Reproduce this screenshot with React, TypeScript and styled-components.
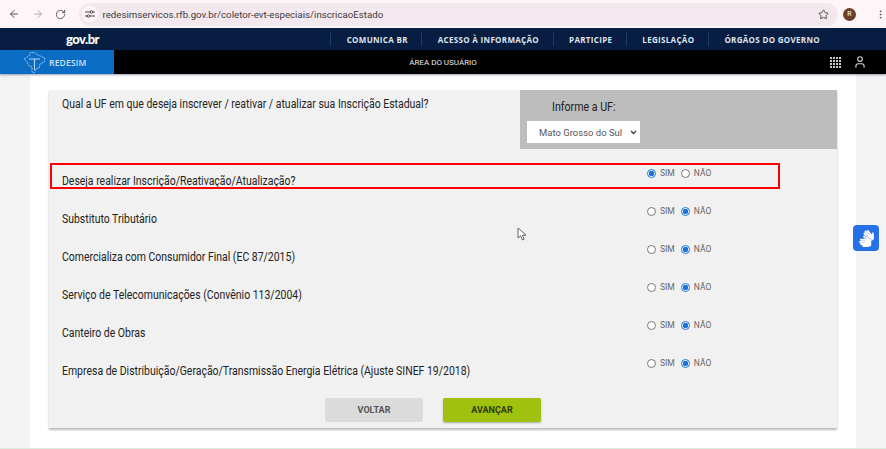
import { ArrowLeft, ArrowRight, EllipsisVertical, RotateCw, Star, User } from 'lucide-react';
import { FaSignLanguage } from 'react-icons/fa';
import styled, { createGlobalStyle } from 'styled-components';

const NAV_ITEMS = ['COMUNICA BR', 'ACESSO À INFORMAÇÃO', 'PARTICIPE', 'LEGISLAÇÃO', 'ÓRGÃOS DO GOVERNO'];

const QUESTIONS = [
  { label: 'Deseja realizar Inscrição/Reativação/Atualização?', yes: true, marked: true },
  { label: 'Substituto Tributário', yes: false },
  { label: 'Comercializa com Consumidor Final (EC 87/2015)', yes: false },
  { label: 'Serviço de Telecomunicações (Convênio 113/2004)', yes: false },
  { label: 'Canteiro de Obras', yes: false },
  { label: 'Empresa de Distribuição/Geração/Transmissão Energia Elétrica (Ajuste SINEF 19/2018)', yes: false },
];

const CHEVRON =
  "url(\"data:image/svg+xml,%3Csvg xmlns='http://www.w3.org/2000/svg' width='7' height='5'%3E%3Cpath d='M1 1l2.5 2.5L6 1' fill='none' stroke='%23444' stroke-width='1.4'/%3E%3C/svg%3E\")";

const App = () => {
  return (
    <>
      <GlobalStyle />
      <BrowserBar>
        <ToolIcon><ArrowLeft size={12} /></ToolIcon>
        <ToolIcon $faded><ArrowRight size={12} /></ToolIcon>
        <ToolIcon><RotateCw size={11} /></ToolIcon>
        <UrlPill>
          <TuneBadge>
            <svg width="10" height="8" viewBox="0 0 10 8" fill="none" stroke="#444" strokeWidth="1">
              <path d="M0 2h5M8 2h2M0 6h2M5 6h5" />
              <circle cx="6.5" cy="2" r="1.3" />
              <circle cx="3.5" cy="6" r="1.3" />
            </svg>
          </TuneBadge>
          <UrlText>redesimservicos.rfb.gov.br/coletor-evt-especiais/inscricaoEstado</UrlText>
          <Star size={11} color="#444" />
        </UrlPill>
        <Avatar>R</Avatar>
        <EllipsisVertical size={11} color="#555" />
      </BrowserBar>

      <GovBar>
        <GovLogo>gov.br</GovLogo>
        <GovNav>
          {NAV_ITEMS.map((item) => (
            <GovNavItem key={item}>{item}</GovNavItem>
          ))}
        </GovNav>
      </GovBar>

      <UserBar>
        <LogoBox>
          <svg width="24" height="24" viewBox="0 0 24 24" fill="none" stroke="#b9d6f2" strokeWidth="0.8">
            <path d="M1 9l5-3 2-4 4 1 3 2 7 3-1 4-4 2-1 4-3 1-2 4-2-1 0-5-3-1-2-4z" strokeDasharray="2 0.8" />
            <path d="M6 9h11M11.5 9v11" strokeWidth="1.1" />
          </svg>
          <LogoText>REDESIM</LogoText>
        </LogoBox>
        <UserBarTitle>ÁREA DO USUÁRIO</UserBarTitle>
        <UserBarIcons>
          <svg width="11" height="11" viewBox="0 0 11 11" fill="#c8c8c8">
            {[0, 3, 6, 9].flatMap((y) =>
              [0, 3, 6, 9].map((x) => <rect key={`${x}-${y}`} x={x} y={y} width="2" height="2" />),
            )}
          </svg>
          <User size={14} />
        </UserBarIcons>
      </UserBar>

      <Page>
        <Sheet>
          <Card>
            <TopRow>
              <TopQuestion>Qual a UF em que deseja inscrever / reativar / atualizar sua Inscrição Estadual?</TopQuestion>
              <UfBox>
                <UfTitle>Informe a UF:</UfTitle>
                <UfSelect defaultValue="MS">
                  <option value="MS">Mato Grosso do Sul</option>
                </UfSelect>
              </UfBox>
            </TopRow>

            <Questions>
              {QUESTIONS.map(({ label, yes, marked }) => (
                <QuestionRow key={label} $marked={marked}>
                  <QuestionLabel>{label}</QuestionLabel>
                  <RadioGroup>
                    <RadioLabel>
                      <Radio type="radio" name={label} defaultChecked={yes} />
                      SIM
                    </RadioLabel>
                    <RadioLabel>
                      <Radio type="radio" name={label} defaultChecked={!yes} />
                      NÃO
                    </RadioLabel>
                  </RadioGroup>
                </QuestionRow>
              ))}
            </Questions>

            <Actions>
              <ActionButton>VOLTAR</ActionButton>
              <ActionButton $primary>AVANÇAR</ActionButton>
            </Actions>
          </Card>
        </Sheet>
      </Page>
      <BottomStrip />

      <Pointer width="10" height="14" viewBox="0 0 10 14">
        <path d="M1 1v10l2.6-2.2L5.4 13l1.8-.8-1.8-4H9z" fill="#fff" stroke="#555" strokeWidth="0.9" />
      </Pointer>
      <SignButton aria-label="Libras">
        <FaSignLanguage size={17} color="#fff" />
      </SignButton>
    </>
  );
};

const GlobalStyle = createGlobalStyle`
  html, body {
    margin: 0;
    height: 449px;
    overflow: hidden;
    background: #fff;
    font-family: Roboto, "Liberation Sans", sans-serif;
  }
  *, *::after {
    box-sizing: border-box;
  }
`;

const BrowserBar = styled.div`
  display: flex;
  align-items: center;
  height: 28px;
  padding: 0 0 0 8px;
  background: #fdf5f7;
  color: #555;
`;

const ToolIcon = styled.span<{ $faded?: boolean }>`
  display: flex;
  justify-content: center;
  width: 12px;
  margin-right: 11.5px;
  color: ${({ $faded }) => ($faded ? '#aaa' : '#555')};
`;

const UrlPill = styled.div`
  display: flex;
  align-items: center;
  width: 760px;
  height: 23px;
  margin-left: 1px;
  padding: 0 9px 0 3px;
  border-radius: 12px;
  background: #f3e8ee;
`;

const TuneBadge = styled.span`
  display: flex;
  align-items: center;
  justify-content: center;
  width: 16px;
  height: 16px;
  border-radius: 50%;
  background: #fdf5f7;
`;

const UrlText = styled.span`
  flex: 1;
  margin-left: 4px;
  font-size: 9.7px;
  color: #3c3c40;
  white-space: nowrap;
`;

const Avatar = styled.span`
  display: flex;
  align-items: center;
  justify-content: center;
  width: 13px;
  height: 13px;
  margin: 0 19px 0 5px;
  border-radius: 50%;
  background: #6d3f2b;
  color: #fff;
  font-size: 7px;
`;

const GovBar = styled.div`
  display: flex;
  align-items: center;
  justify-content: space-between;
  height: 22px;
  padding: 0 66px;
  background: #071d41;
`;

const GovLogo = styled.span`
  color: #fff;
  font-family: Lato, sans-serif;
  font-size: 13px;
  font-weight: 900;
  letter-spacing: -0.5px;
`;

const GovNav = styled.nav`
  display: flex;
  height: 14px;
`;

const GovNavItem = styled.span`
  display: flex;
  align-items: center;
  padding: 0 13.5px 0 15.5px;
  border-left: 1px solid #21385e;
  color: #dfe4ec;
  font-family: "Open Sans", sans-serif;
  font-size: 8px;
  font-weight: 700;
  letter-spacing: 0.32px;
  white-space: nowrap;

  &:last-child {
    padding-right: 0;
  }
`;

const UserBar = styled.div`
  display: grid;
  grid-template-columns: 114px 1fr 114px;
  align-items: center;
  height: 24px;
  background: #000;
  box-shadow: 0 1px 2px rgba(60, 70, 110, 0.5);
  position: relative;
`;

const LogoBox = styled.div`
  display: flex;
  align-items: center;
  gap: 2px;
  height: 24px;
  padding-left: 23px;
  background: #0b6cc4;
`;

const LogoText = styled.span`
  color: #cfe3f6;
  font-family: "Open Sans", sans-serif;
  font-size: 8.5px;
  font-weight: 600;
  letter-spacing: 0.2px;
`;

const UserBarTitle = styled.span`
  color: #e8e8e8;
  font-size: 8px;
  text-align: center;
`;

const UserBarIcons = styled.div`
  display: flex;
  align-items: center;
  justify-content: flex-end;
  gap: 12px;
  padding-right: 19px;
  color: #ccc;
`;

const Page = styled.main`
  height: 374px;
  padding: 0 30px;
  background: #f3f3f3;
`;

const Sheet = styled.div`
  height: 100%;
  padding: 16px 19px 0;
  background: #fff;
`;

const Card = styled.section`
  height: 338px;
  background: #f1f1f1;
  box-shadow: 0 2px 2px #bbb;
`;

const TopRow = styled.div`
  display: grid;
  grid-template-columns: 471px 1fr;
  height: 59px;
`;

// the reference is squeezed sideways, so the text is narrowed rather than made smaller
const TopQuestion = styled.p`
  margin: 7px 0 0 13px;
  color: #222;
  font-size: 12px;
  line-height: 15px;
  white-space: nowrap;
  transform: scaleX(0.872);
  transform-origin: left;
`;

const UfBox = styled.div`
  display: flex;
  flex-direction: column;
  padding: 10px 0 0 7px;
  background: #bdbdbd;
`;

const UfTitle = styled.span`
  margin-left: 25px;
  color: #222;
  font-size: 12px;
  line-height: 15px;
  transform: scaleX(0.887);
  transform-origin: left;
`;

const UfSelect = styled.select`
  appearance: none;
  width: 113px;
  height: 22px;
  margin-top: 6px;
  padding: 0 0 0 12px;
  border: none;
  border-radius: 0;
  background: #fff ${CHEVRON} no-repeat right 3px center;
  color: #555;
  font-family: Roboto, sans-serif;
  font-size: 9.5px;
`;

const Questions = styled.div`
  margin-top: 13px;
`;

const QuestionRow = styled.div<{ $marked?: boolean }>`
  display: grid;
  grid-template-columns: 598px 1fr;
  height: 38px;
  position: relative;

  ${({ $marked }) =>
    $marked &&
    `
    &::after {
      content: '';
      position: absolute;
      top: 1px;
      left: 1px;
      width: 730px;
      height: 26px;
      border: 2px solid #f00;
      pointer-events: none;
    }
  `}
`;

const QuestionLabel = styled.span`
  margin: 12px 0 0 13px;
  color: #222;
  font-size: 12px;
  line-height: 15px;
  white-space: nowrap;
  transform: scaleX(0.872);
  transform-origin: left;
`;

const RadioGroup = styled.div`
  display: flex;
  gap: 6px;
  height: 22px;
  align-items: center;
`;

const RadioLabel = styled.label`
  display: flex;
  align-items: center;
  gap: 4px;
  color: #666;
  font-size: 8.5px;
`;

const Radio = styled.input`
  appearance: none;
  width: 9px;
  height: 9px;
  margin: 0;
  border: 1px solid #777;
  border-radius: 50%;
  background: #fff;

  &:checked {
    border-color: #1a73d9;
    background: radial-gradient(circle, #1a73d9 0 2.6px, #fff 3px);
  }
`;

const Actions = styled.div`
  display: flex;
  gap: 20px;
  padding: 8px 0 0 276px;
`;

const ActionButton = styled.button<{ $primary?: boolean }>`
  width: 98px;
  height: 24px;
  padding: 0;
  border: none;
  border-radius: 2px;
  background: ${({ $primary }) => ($primary ? '#a0c20e' : '#dbdbdb')};
  box-shadow: ${({ $primary }) => ($primary ? '0 1px 2px rgba(0,0,0,0.3)' : 'none')};
  color: ${({ $primary }) => ($primary ? '#2f3a08' : '#555')};
  font-family: Roboto, sans-serif;
  font-size: 9px;
  font-weight: 700;
`;

const BottomStrip = styled.div`
  height: 1px;
  background: #dcebe0;
`;

const Pointer = styled.svg`
  position: absolute;
  top: 227px;
  left: 517px;
`;

const SignButton = styled.button`
  position: absolute;
  top: 225px;
  left: 853px;
  display: flex;
  align-items: center;
  justify-content: center;
  width: 26px;
  height: 26px;
  padding: 0;
  border: none;
  border-radius: 4px;
  background: #2670e8;
`;

export default App;
